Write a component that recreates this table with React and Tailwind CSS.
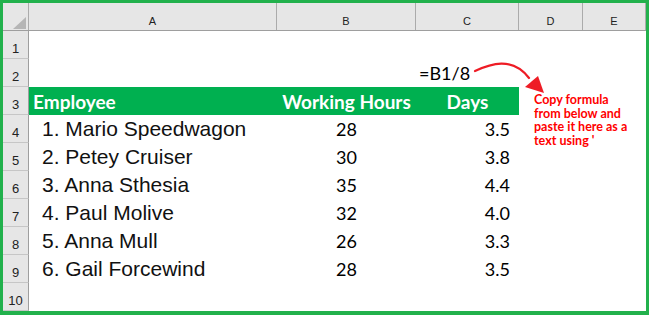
import React from "react";

const cols = "grid grid-cols-[26px_248px_139px_103px_64px_63px]";
const rows = [
  ["1. Mario Speedwagon", "28", "3.5"],
  ["2. Petey Cruiser", "30", "3.8"],
  ["3. Anna Sthesia", "35", "4.4"],
  ["4. Paul Molive", "32", "4.0"],
  ["5. Anna Mull", "26", "3.3"],
  ["6. Gail Forcewind", "28", "3.5"],
];

function RowHead({ n }) {
  return (
    <div className="h-[28px] bg-[#e6e6e6] border-r border-b border-r-[#9e9e9e] border-b-[#c6c6c6] text-center pt-[10px] leading-[15px] text-[13px] text-[#222] font-['Liberation_Sans',Arial,sans-serif]">
      {n}
    </div>
  );
}

export default function App() {
  const calibri = "font-['Lato','Open_Sans',sans-serif]";
  return (
    <div className="relative w-[649px] h-[315px] bg-white border-[#22b14c] border-l-[3px] border-t-[3px] border-r-[3px] border-b-[4px] overflow-hidden">
      {/* column headers */}
      <div className={`${cols} h-[28px] bg-[#e6e6e6] border-b border-[#9e9e9e] text-[11px] text-[#222] font-['Liberation_Sans',Arial,sans-serif]`}>
        <div className="relative border-r border-[#ababab]">
          <svg className="absolute left-[10px] top-[14px]" width="13" height="12" viewBox="0 0 13 12">
            <polygon points="13,0 13,12 0,12" fill="#b5b5b5" />
          </svg>
        </div>
        {["A", "B", "C", "D", "E"].map((c) => (
          <div key={c} className="border-r border-[#ababab] text-center pt-[12px] leading-[13px]">
            {c}
          </div>
        ))}
      </div>

      {/* row 1 */}
      <div className={cols}>
        <RowHead n={1} />
        <div /><div /><div /><div /><div />
      </div>
      {/* row 2 */}
      <div className={cols}>
        <RowHead n={2} />
        <div /><div />
        <div className={`h-[28px] pl-[3px] leading-[29px] text-[18px] text-black whitespace-nowrap ${calibri}`}>=B1/8</div>
        <div /><div />
      </div>
      {/* row 3 */}
      <div className={cols}>
        <RowHead n={3} />
        <div className={`h-[28px] bg-[#00b050] pl-[4px] leading-[29px] text-[19px] font-bold text-white ${calibri}`}>Employee</div>
        <div className={`h-[28px] bg-[#00b050] text-center leading-[29px] text-[19px] font-bold text-white whitespace-nowrap ${calibri}`}>Working Hours</div>
        <div className={`h-[28px] bg-[#00b050] text-center leading-[29px] text-[19px] font-bold text-white ${calibri}`}>Days</div>
        <div className="relative">
          <div className={`absolute left-[15px] top-[6px] w-[120px] text-[12.5px] leading-[13.5px] font-bold text-[#ff0000] ${calibri}`}>
            Copy formula
            <br />
            from below and
            <br />
            paste it here as a
            <br />
            text using '
          </div>
        </div>
        <div />
      </div>
      {/* data rows */}
      {rows.map((r, i) => (
        <div key={i} className={cols}>
          <RowHead n={i + 4} />
          <div className="h-[28px] pl-[13px] leading-[28px] text-[21px] text-[#111] whitespace-nowrap font-['Liberation_Sans',Arial,sans-serif]">
            {r[0]}
          </div>
          <div className={`h-[28px] text-center leading-[29px] text-[18px] text-black ${calibri}`}>{r[1]}</div>
          <div className={`h-[28px] text-right pr-[9px] leading-[29px] text-[18px] text-black ${calibri}`}>{r[2]}</div>
          <div /><div />
        </div>
      ))}
      {/* row 10 */}
      <div className={cols}>
        <RowHead n={10} />
        <div /><div /><div /><div /><div />
      </div>

      {/* arrow overlay */}
      <svg className="absolute left-0 top-0 pointer-events-none" width="649" height="315" viewBox="3 3 649 315">
        <path d="M475 71 C 490 64, 512 56, 529 78" fill="none" stroke="#ee1c25" strokeWidth="2.2" strokeLinecap="round" />
        <polygon points="525,87 538,76 544,93" fill="#ee1c25" />
      </svg>
    </div>
  );
}
